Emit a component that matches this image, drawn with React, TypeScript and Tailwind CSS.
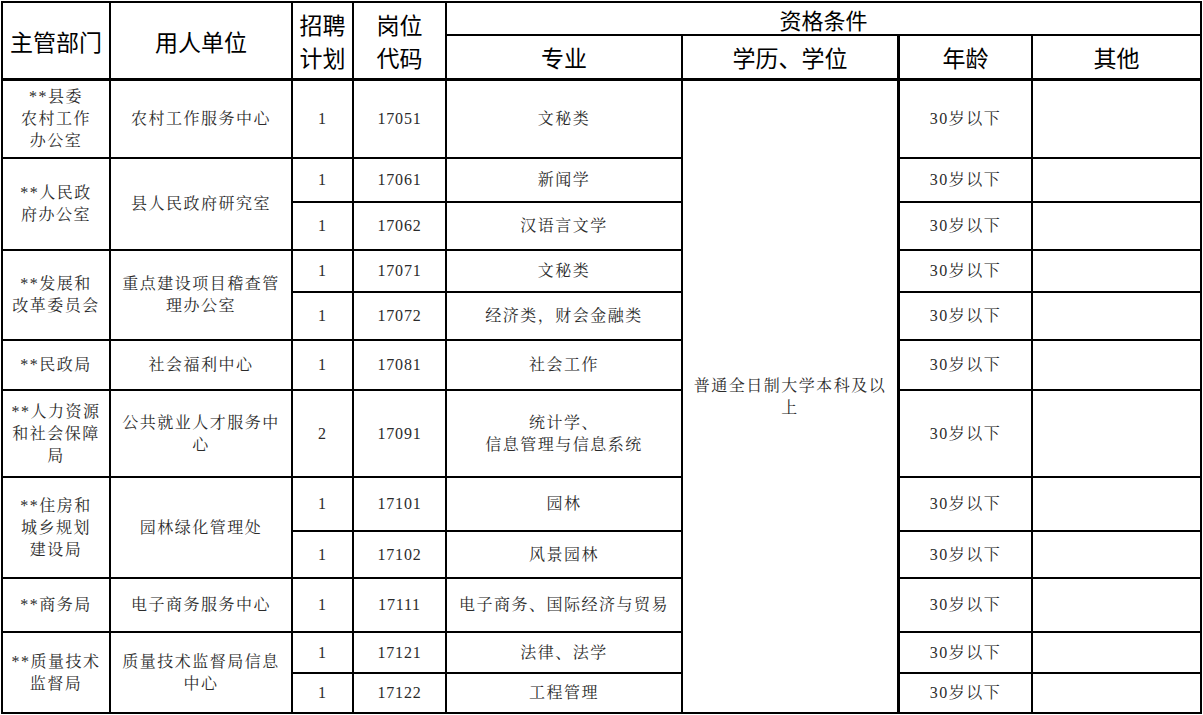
import React from "react";

const RS: Record<number, string> = {
  1: "row-start-1",
  2: "row-start-2",
  3: "row-start-3",
  4: "row-start-4",
  5: "row-start-5",
  6: "row-start-6",
  7: "row-start-7",
  8: "row-start-8",
  9: "row-start-9",
  10: "row-start-10",
  11: "row-start-11",
  12: "row-start-12",
  13: "row-start-13",
  14: "row-start-14",
};
const SP: Record<number, string> = {
  1: "row-span-1",
  2: "row-span-2",
  12: "row-span-12",
};
const CS: Record<number, string> = {
  1: "col-start-1",
  2: "col-start-2",
  3: "col-start-3",
  4: "col-start-4",
  5: "col-start-5",
  6: "col-start-6",
  7: "col-start-7",
  8: "col-start-8",
};

const serif = "font-['Liberation_Serif','Noto_Serif_CJK_SC','Noto_Sans_CJK_SC',serif]";
const sans = "font-['Noto_Sans_CJK_SC','Liberation_Sans',sans-serif]";

function Cell({
  r,
  c,
  span = 1,
  className = "",
  children,
}: {
  r: number;
  c: number;
  span?: number;
  className?: string;
  children?: React.ReactNode;
}) {
  return (
    <div
      className={`${RS[r]} ${SP[span]} ${CS[c]} bg-white flex items-center justify-center text-center whitespace-nowrap ${className}`}
    >
      {children}
    </div>
  );
}

const body = `${serif} text-[16px] tracking-[1.5px] leading-[22px] text-[#2b2b2b]`;
const num = `${serif} text-[16px] tracking-[0.8px] text-[#2b2b2b]`;
const head = `${sans} text-[23px] leading-[28px] text-black`;

type Row = { r: number; plan: string; code: string; major: React.ReactNode };
const rows: Row[] = [
  { r: 3, plan: "1", code: "17051", major: "文秘类" },
  { r: 4, plan: "1", code: "17061", major: "新闻学" },
  { r: 5, plan: "1", code: "17062", major: "汉语言文学" },
  { r: 6, plan: "1", code: "17071", major: "文秘类" },
  { r: 7, plan: "1", code: "17072", major: "经济类，财会金融类" },
  { r: 8, plan: "1", code: "17081", major: "社会工作" },
  {
    r: 9,
    plan: "2",
    code: "17091",
    major: (
      <>
        统计学、
        <br />
        信息管理与信息系统
      </>
    ),
  },
  { r: 10, plan: "1", code: "17101", major: "园林" },
  { r: 11, plan: "1", code: "17102", major: "风景园林" },
  { r: 12, plan: "1", code: "17111", major: "电子商务、国际经济与贸易" },
  { r: 13, plan: "1", code: "17121", major: "法律、法学" },
  { r: 14, plan: "1", code: "17122", major: "工程管理" },
];

type Grp = { r: number; span: number; dept: React.ReactNode; unit: React.ReactNode };
const groups: Grp[] = [
  {
    r: 3,
    span: 1,
    dept: (
      <>
        **县委
        <br />
        农村工作
        <br />
        办公室
      </>
    ),
    unit: "农村工作服务中心",
  },
  {
    r: 4,
    span: 2,
    dept: (
      <>
        **人民政
        <br />
        府办公室
      </>
    ),
    unit: "县人民政府研究室",
  },
  {
    r: 6,
    span: 2,
    dept: (
      <>
        **发展和
        <br />
        改革委员会
      </>
    ),
    unit: (
      <>
        重点建设项目稽查管
        <br />
        理办公室
      </>
    ),
  },
  { r: 8, span: 1, dept: "**民政局", unit: "社会福利中心" },
  {
    r: 9,
    span: 1,
    dept: (
      <>
        **人力资源
        <br />
        和社会保障
        <br />
        局
      </>
    ),
    unit: (
      <>
        公共就业人才服务中
        <br />心
      </>
    ),
  },
  {
    r: 10,
    span: 2,
    dept: (
      <>
        **住房和
        <br />
        城乡规划
        <br />
        建设局
      </>
    ),
    unit: "园林绿化管理处",
  },
  { r: 12, span: 1, dept: "**商务局", unit: "电子商务服务中心" },
  {
    r: 13,
    span: 2,
    dept: (
      <>
        **质量技术
        <br />
        监督局
      </>
    ),
    unit: (
      <>
        质量技术监督局信息
        <br />
        中心
      </>
    ),
  },
];

export default function App() {
  return (
    <div className="w-[1203px] h-[715px] bg-white overflow-hidden pt-[1px] pl-[1px]">
      <div className="inline-grid bg-black p-[2px] gap-[2px] grid-cols-[106px_180px_59px_91px_234px_215px_131px_167px] grid-rows-[31px_43px_76px_42px_46px_40px_46px_48px_85px_52px_45px_52px_39px_38px]">
        <Cell r={1} c={1} span={2} className={`${head} border-b border-black`}>
          主管部门
        </Cell>
        <Cell r={1} c={2} span={2} className={`${head} border-b border-black`}>
          用人单位
        </Cell>
        <Cell r={1} c={3} span={2} className={`${head} border-b border-black`}>
          <div className="flex flex-col gap-[0px]">
            <span className="leading-[33px]">招聘</span>
            <span className="leading-[33px]">计划</span>
          </div>
        </Cell>
        <Cell r={1} c={4} span={2} className={`${head} border-b border-black`}>
          <div className="flex flex-col gap-[0px]">
            <span className="leading-[33px]">岗位</span>
            <span className="leading-[33px]">代码</span>
          </div>
        </Cell>
        <div className="row-start-1 col-start-5 col-span-4 bg-white flex items-center justify-center">
          <span className={`${sans} text-[22px] leading-[28px] text-black`}>资格条件</span>
        </div>
        <Cell r={2} c={5} className={`${head} border-b border-black`}>
          专业
        </Cell>
        <Cell r={2} c={6} className={`${head} border-b border-r border-black`}>
          学历、学位
        </Cell>
        <Cell r={2} c={7} className={`${head} border-b border-black`}>
          年龄
        </Cell>
        <Cell r={2} c={8} className={`${head} border-b border-black`}>
          其他
        </Cell>

        {groups.map((g) => (
          <React.Fragment key={g.r}>
            <Cell r={g.r} c={1} span={g.span} className={body}>
              <span>{g.dept}</span>
            </Cell>
            <Cell r={g.r} c={2} span={g.span} className={body}>
              <span>{g.unit}</span>
            </Cell>
          </React.Fragment>
        ))}

        {rows.map((row) => (
          <React.Fragment key={row.r}>
            <Cell r={row.r} c={3} className={num}>
              {row.plan}
            </Cell>
            <Cell r={row.r} c={4} className={num}>
              {row.code}
            </Cell>
            <Cell r={row.r} c={5} className={body}>
              <span>{row.major}</span>
            </Cell>
            <Cell r={row.r} c={7} className={`${body} tracking-[0.5px]`}>
              30岁以下
            </Cell>
            <Cell r={row.r} c={8} className={body}>
              {""}
            </Cell>
          </React.Fragment>
        ))}

        <Cell r={3} c={6} span={12} className={`${body} border-r border-black`}>
          <span>
            普通全日制大学本科及以
            <br />上
          </span>
        </Cell>
      </div>
    </div>
  );
}
